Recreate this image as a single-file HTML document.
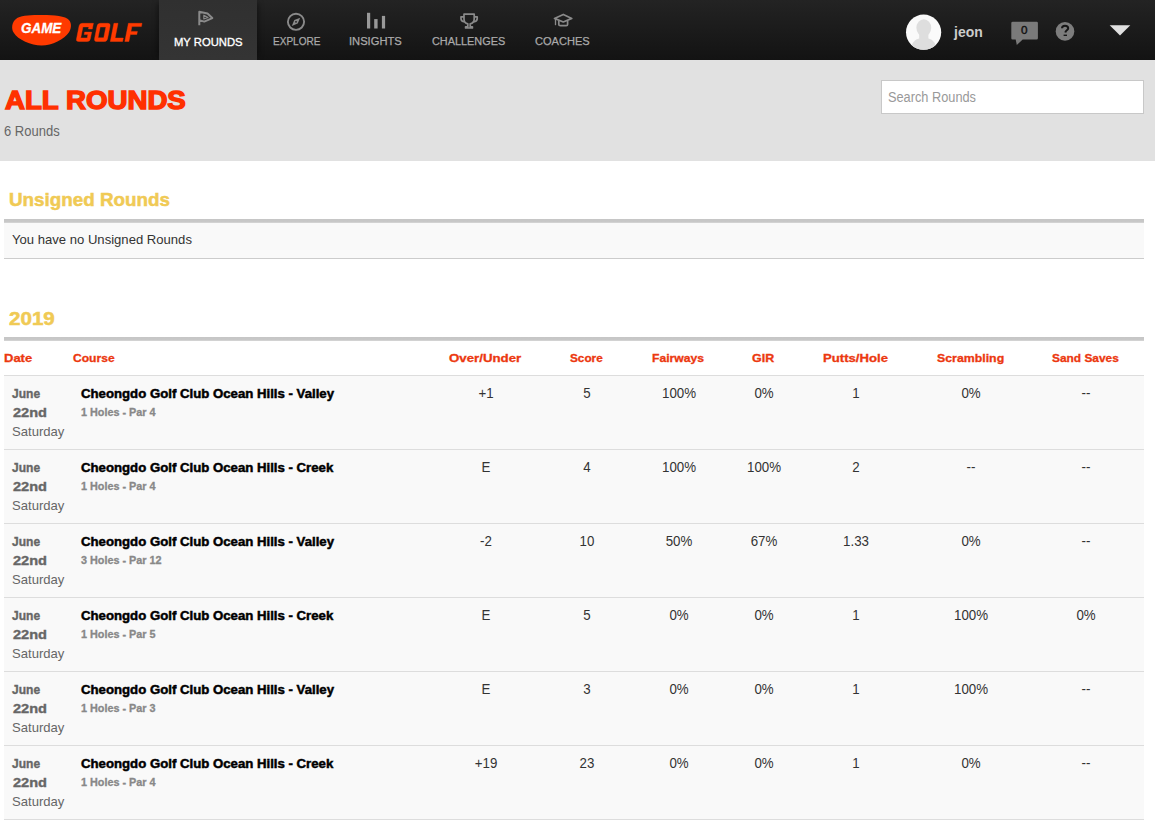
<!DOCTYPE html>
<html><head><meta charset="utf-8">
<style>
*{margin:0;padding:0;box-sizing:border-box}
html,body{width:1155px;height:820px;overflow:hidden;background:#fff;font-family:"Liberation Sans",sans-serif}
.a{position:absolute;white-space:nowrap;line-height:1;transform-origin:0 0}
#hdr{position:absolute;left:0;top:0;width:1155px;height:60px;background:linear-gradient(#232323,#131313)}
#act{position:absolute;left:159px;top:0;width:98px;height:60px;background:linear-gradient(#303030,#343434);box-shadow:-5px 0 5px -3px rgba(0,0,0,.35),5px 0 5px -3px rgba(0,0,0,.35)}
#ph{position:absolute;left:0;top:60px;width:1155px;height:101px;background:#e1e1e1}
.bar{position:absolute;left:4px;width:1140px;height:4px;background:linear-gradient(#c6c6c6 0,#c8c8c8 75%,#d2d2d2 75%)}
.row{position:absolute;left:4px;width:1140px;height:75px;background:#f9f9f9;border-top:1px solid #ddd;border-bottom:1px solid #ddd}
.v{transform:translateX(-50%)}
</style></head><body>
<div id="hdr"></div>
<div id="act"></div>
<svg style="position:absolute;left:0;top:0" width="1155" height="60" viewBox="0 0 1155 60">
<path d="M38,15.1 C50,15.1 62,15.5 67.5,18.8 C72,21.8 71.8,28 69,32.2 C64.5,39 52,45.5 41.6,45.5 C31,45.5 18,40 13.6,32.6 C11,28 12,22 16,18.9 C20,15.9 28,15.1 38,15.1 Z" fill="#ff3a00"/>
<g transform="translate(0,41.5) skewX(-11.3) translate(0,-41.5)" fill="#ff3a00" stroke="#ff3a00" stroke-width="0.4" stroke-linejoin="round">
<path d="M78.5,23.3 H89.8 V29 H85.9 V26.9 H80 V37.9 H86.5 V34.6 H82.8 V32.1 H89.8 V39 Q89.8,41.5 87.3,41.5 H78.5 Q76,41.5 76,39 V25.8 Q76,23.3 78.5,23.3 Z"/>
<path fill-rule="evenodd" d="M96.8,23.3 H104.2 Q107,23.3 107,26.1 V38.7 Q107,41.5 104.2,41.5 H96.8 Q94,41.5 94,38.7 V26.1 Q94,23.3 96.8,23.3 Z M97.3,27 V37.8 H103 V27 Z"/>
<path d="M110.3,23.3 H114.4 V38 H122.6 V41.5 H110.3 Z"/>
<path d="M124.8,23.3 H138.4 V26.6 H128.9 V31.4 H135.4 V34.5 H128.9 V41.5 H124.8 Z"/>
</g>
<g fill="none" stroke="#8a8a8a" stroke-width="1.7" stroke-linejoin="round">
<path d="M199.3,25.2 V11.8 L207.5,13.6 L212.3,18.1 L204.3,21.6 L199.3,20.3" stroke-width="2"/>
<path d="M203.8,15.2 V19 L208,17.6 Z" stroke-width="1.1"/>
<circle cx="296" cy="21.8" r="8.1" stroke-width="1.9"/>
<path d="M464,14.2 H474.2 V19 C474.2,21.8 472,23.4 470.2,23.8 V26.8 H472.4 V28 H465.6 V26.8 H467.8 V23.8 C466,23.4 464,21.8 464,19 Z"/>
<path d="M464,16.8 H461 V18.8 C461,20.6 462.6,21.6 464.6,21.8 M474.2,16.8 H477.2 V18.8 C477.2,20.6 475.6,21.6 473.6,21.8"/>
<path d="M554.5,18.4 L563.3,14.4 L571.8,18.4 L563.3,22 Z"/>
<path d="M558.8,20.4 V24.5 C558.8,25.2 559.5,25.6 560.5,25.6 H566.2 C567,25.6 567.6,25.2 567.6,24.5 V20.4"/>
<path d="M555.5,18.8 V25.2" stroke-width="1.3"/>
</g>
<path d="M291.8,25.9 L297.7,23.5 L300.2,17.7 L294.3,20.1 Z" fill="#8a8a8a"/>
<circle cx="296" cy="21.8" r="0.9" fill="#1b1b1b"/>
<rect x="367" y="12.8" width="3.2" height="15.7" fill="#999"/>
<rect x="374.2" y="19.1" width="3.4" height="9.4" fill="#999"/>
<rect x="381.9" y="15.9" width="3.2" height="12.6" fill="#999"/>
<circle cx="923.6" cy="32.2" r="17.6" fill="#fafafa"/>
<clipPath id="av"><circle cx="923.6" cy="32.2" r="17.6"/></clipPath>
<g clip-path="url(#av)" fill="#dedede">
<ellipse cx="923.8" cy="27.8" rx="7.4" ry="8.6"/>
<path d="M919.2,33 H928.4 V38.5 C932.5,39.5 935.5,42 937,50 H910.5 C912,42 915,39.5 919.2,38.5 Z"/>
</g>
<path d="M1012.8,21.8 H1036.6 Q1037.9,21.8 1037.9,23.1 V38.3 Q1037.9,39.6 1036.6,39.6 H1022.7 L1016.8,45.1 L1015.7,39.6 H1012.6 Q1011.3,39.6 1011.3,38.3 V23.1 Q1011.3,21.8 1012.8,21.8 Z" fill="#7a7a7a"/>
<circle cx="1065" cy="31.4" r="9.3" fill="#7d7d7d"/>
<path d="M1062,28.2 C1062,26.5 1063.4,25.7 1065,25.7 C1066.8,25.7 1068.2,26.7 1068.2,28.3 C1068.2,30.2 1065.6,30.4 1065.3,32.5" fill="none" stroke="#151515" stroke-width="2"/>
<rect x="1063.6" y="34.6" width="3.4" height="1.4" fill="#151515"/>
<path d="M1109.7,25.2 H1130.3 L1120,35.5 Z" fill="#e0e0e0"/>
</svg>
<div id="ph"></div>
<div style="position:absolute;left:881px;top:80px;width:263px;height:34px;background:#fff;border:1px solid #c8c8c8"></div>
<div class="bar" style="top:219px"></div>
<div style="position:absolute;left:4px;top:223px;width:1140px;height:36px;background:#f9f9f9;border-bottom:1px solid #ccc"></div>
<div class="bar" style="top:337px"></div>
<div class="a" style="left:21.21px;top:21.00px;font-size:14.00px;color:#fff;font-weight:bold;font-style:italic;-webkit-text-stroke:0.3px #fff;transform:scaleX(0.9589)">GAME</div>
<div class="a" style="left:1021.25px;top:25.00px;font-size:11.00px;color:#111;-webkit-text-stroke:0.4px #111;transform:scaleX(1.0648)">0</div>
<div class="a" style="left:173.68px;top:36.00px;font-size:11.70px;color:#fff;-webkit-text-stroke:0.35px #fff;transform:scaleX(0.9625)">MY ROUNDS</div>
<div class="a" style="left:272.60px;top:35.00px;font-size:11.70px;color:#aaa;-webkit-text-stroke:0.25px #aaa;transform:scaleX(0.8602)">EXPLORE</div>
<div class="a" style="left:348.53px;top:35.00px;font-size:11.70px;color:#aaa;-webkit-text-stroke:0.25px #aaa;transform:scaleX(0.9550)">INSIGHTS</div>
<div class="a" style="left:431.81px;top:35.00px;font-size:11.70px;color:#aaa;-webkit-text-stroke:0.25px #aaa;transform:scaleX(0.9316)">CHALLENGES</div>
<div class="a" style="left:535.30px;top:35.00px;font-size:11.70px;color:#aaa;-webkit-text-stroke:0.25px #aaa;transform:scaleX(0.9469)">COACHES</div>
<div class="a" style="left:954.08px;top:25.00px;font-size:14.50px;color:#ccc;font-weight:bold;transform:scaleX(0.9625)">jeon</div>
<div class="a" style="left:4.53px;top:88.00px;font-size:25.80px;color:#ff3000;font-weight:bold;-webkit-text-stroke:1.4px #ff3000;transform:scaleX(1.0722)">ALL ROUNDS</div>
<div class="a" style="left:3.74px;top:124.00px;font-size:14.20px;color:#666;transform:scaleX(0.9163)">6 Rounds</div>
<div class="a" style="left:888.21px;top:90.00px;font-size:14.00px;color:#999;transform:scaleX(0.9115)">Search Rounds</div>
<div class="a" style="left:8.80px;top:191.00px;font-size:18.60px;color:#f0ca55;font-weight:bold;-webkit-text-stroke:0.5px #f0ca55;transform:scaleX(1.0118)">Unsigned Rounds</div>
<div class="a" style="left:11.78px;top:233.00px;font-size:13.30px;color:#333;transform:scaleX(0.9841)">You have no Unsigned Rounds</div>
<div class="a" style="left:9.15px;top:310.00px;font-size:18.20px;color:#f0ca55;font-weight:bold;-webkit-text-stroke:0.5px #f0ca55;transform:scaleX(1.1320)">2019</div>
<div class="a" style="left:3.54px;top:353.00px;font-size:10.90px;color:#ec3810;font-weight:bold;-webkit-text-stroke:0.3px #ec3810;transform:scaleX(1.1941)">Date</div>
<div class="a" style="left:72.70px;top:353.00px;font-size:10.90px;color:#ec3810;font-weight:bold;-webkit-text-stroke:0.3px #ec3810;transform:scaleX(1.1100)">Course</div>
<div class="a" style="left:449.02px;top:353.00px;font-size:10.90px;color:#ec3810;font-weight:bold;-webkit-text-stroke:0.3px #ec3810;transform:scaleX(1.2174)">Over/Under</div>
<div class="a" style="left:569.71px;top:353.00px;font-size:10.90px;color:#ec3810;font-weight:bold;-webkit-text-stroke:0.3px #ec3810;transform:scaleX(1.0826)">Score</div>
<div class="a" style="left:651.82px;top:353.00px;font-size:10.90px;color:#ec3810;font-weight:bold;-webkit-text-stroke:0.3px #ec3810;transform:scaleX(1.1163)">Fairways</div>
<div class="a" style="left:752.31px;top:353.00px;font-size:10.90px;color:#ec3810;font-weight:bold;-webkit-text-stroke:0.3px #ec3810;transform:scaleX(1.1434)">GIR</div>
<div class="a" style="left:822.64px;top:353.00px;font-size:10.90px;color:#ec3810;font-weight:bold;-webkit-text-stroke:0.3px #ec3810;transform:scaleX(1.2059)">Putts/Hole</div>
<div class="a" style="left:936.61px;top:353.00px;font-size:10.90px;color:#ec3810;font-weight:bold;-webkit-text-stroke:0.3px #ec3810;transform:scaleX(1.1329)">Scrambling</div>
<div class="a" style="left:1052.43px;top:353.00px;font-size:10.90px;color:#ec3810;font-weight:bold;-webkit-text-stroke:0.3px #ec3810;transform:scaleX(1.0921)">Sand Saves</div>
<div class="row" style="top:375px"></div>
<div class="a" style="left:11.94px;top:388.00px;font-size:12.20px;color:#666;font-weight:bold;-webkit-text-stroke:0.35px #666;transform:scaleX(0.9880)">June</div>
<div class="a" style="left:12.78px;top:407.00px;font-size:12.20px;color:#666;font-weight:bold;-webkit-text-stroke:0.35px #666;transform:scaleX(1.1953)">22nd</div>
<div class="a" style="left:11.59px;top:426.00px;font-size:12.20px;color:#666;transform:scaleX(1.0732)">Saturday</div>
<div class="a" style="left:80.65px;top:389.00px;font-size:11.90px;color:#000;font-weight:bold;-webkit-text-stroke:0.45px #000;transform:scaleX(1.1100)">Cheongdo Golf Club Ocean Hills - Valley</div>
<div class="a" style="left:80.83px;top:407.00px;font-size:10.80px;color:#888;font-weight:bold;-webkit-text-stroke:0.3px #888;transform:scaleX(1.0021)">1 Holes - Par 4</div>
<div class="a v" style="left:485.5px;top:386.00px;font-size:14.60px;color:#333"><span style="display:inline-block;transform:scaleX(0.9121)">+1</span></div>
<div class="a v" style="left:586.8px;top:386.00px;font-size:14.60px;color:#333"><span style="display:inline-block;transform:scaleX(0.9121)">5</span></div>
<div class="a v" style="left:678.5px;top:386.00px;font-size:14.60px;color:#333"><span style="display:inline-block;transform:scaleX(0.9121)">100%</span></div>
<div class="a v" style="left:763.5px;top:386.00px;font-size:14.60px;color:#333"><span style="display:inline-block;transform:scaleX(0.9121)">0%</span></div>
<div class="a v" style="left:855.5px;top:386.00px;font-size:14.60px;color:#333"><span style="display:inline-block;transform:scaleX(0.9121)">1</span></div>
<div class="a v" style="left:970.5px;top:386.00px;font-size:14.60px;color:#333"><span style="display:inline-block;transform:scaleX(0.9121)">0%</span></div>
<div class="a v" style="left:1086px;top:386.00px;font-size:14.60px;color:#333"><span style="display:inline-block;transform:scaleX(0.9121)">--</span></div>
<div class="row" style="top:449px"></div>
<div class="a" style="left:11.94px;top:462.00px;font-size:12.20px;color:#666;font-weight:bold;-webkit-text-stroke:0.35px #666;transform:scaleX(0.9880)">June</div>
<div class="a" style="left:12.78px;top:481.00px;font-size:12.20px;color:#666;font-weight:bold;-webkit-text-stroke:0.35px #666;transform:scaleX(1.1953)">22nd</div>
<div class="a" style="left:11.59px;top:500.00px;font-size:12.20px;color:#666;transform:scaleX(1.0732)">Saturday</div>
<div class="a" style="left:80.65px;top:463.00px;font-size:11.90px;color:#000;font-weight:bold;-webkit-text-stroke:0.45px #000;transform:scaleX(1.1100)">Cheongdo Golf Club Ocean Hills - Creek</div>
<div class="a" style="left:80.83px;top:481.00px;font-size:10.80px;color:#888;font-weight:bold;-webkit-text-stroke:0.3px #888;transform:scaleX(1.0021)">1 Holes - Par 4</div>
<div class="a v" style="left:485.5px;top:460.00px;font-size:14.60px;color:#333"><span style="display:inline-block;transform:scaleX(0.9121)">E</span></div>
<div class="a v" style="left:586.8px;top:460.00px;font-size:14.60px;color:#333"><span style="display:inline-block;transform:scaleX(0.9121)">4</span></div>
<div class="a v" style="left:678.5px;top:460.00px;font-size:14.60px;color:#333"><span style="display:inline-block;transform:scaleX(0.9121)">100%</span></div>
<div class="a v" style="left:763.5px;top:460.00px;font-size:14.60px;color:#333"><span style="display:inline-block;transform:scaleX(0.9121)">100%</span></div>
<div class="a v" style="left:855.5px;top:460.00px;font-size:14.60px;color:#333"><span style="display:inline-block;transform:scaleX(0.9121)">2</span></div>
<div class="a v" style="left:970.5px;top:460.00px;font-size:14.60px;color:#333"><span style="display:inline-block;transform:scaleX(0.9121)">--</span></div>
<div class="a v" style="left:1086px;top:460.00px;font-size:14.60px;color:#333"><span style="display:inline-block;transform:scaleX(0.9121)">--</span></div>
<div class="row" style="top:523px"></div>
<div class="a" style="left:11.94px;top:536.00px;font-size:12.20px;color:#666;font-weight:bold;-webkit-text-stroke:0.35px #666;transform:scaleX(0.9880)">June</div>
<div class="a" style="left:12.78px;top:555.00px;font-size:12.20px;color:#666;font-weight:bold;-webkit-text-stroke:0.35px #666;transform:scaleX(1.1953)">22nd</div>
<div class="a" style="left:11.59px;top:574.00px;font-size:12.20px;color:#666;transform:scaleX(1.0732)">Saturday</div>
<div class="a" style="left:80.65px;top:537.00px;font-size:11.90px;color:#000;font-weight:bold;-webkit-text-stroke:0.45px #000;transform:scaleX(1.1100)">Cheongdo Golf Club Ocean Hills - Valley</div>
<div class="a" style="left:80.83px;top:555.00px;font-size:10.80px;color:#888;font-weight:bold;-webkit-text-stroke:0.3px #888;transform:scaleX(1.0021)">3 Holes - Par 12</div>
<div class="a v" style="left:485.5px;top:534.00px;font-size:14.60px;color:#333"><span style="display:inline-block;transform:scaleX(0.9121)">-2</span></div>
<div class="a v" style="left:586.8px;top:534.00px;font-size:14.60px;color:#333"><span style="display:inline-block;transform:scaleX(0.9121)">10</span></div>
<div class="a v" style="left:678.5px;top:534.00px;font-size:14.60px;color:#333"><span style="display:inline-block;transform:scaleX(0.9121)">50%</span></div>
<div class="a v" style="left:763.5px;top:534.00px;font-size:14.60px;color:#333"><span style="display:inline-block;transform:scaleX(0.9121)">67%</span></div>
<div class="a v" style="left:855.5px;top:534.00px;font-size:14.60px;color:#333"><span style="display:inline-block;transform:scaleX(0.9121)">1.33</span></div>
<div class="a v" style="left:970.5px;top:534.00px;font-size:14.60px;color:#333"><span style="display:inline-block;transform:scaleX(0.9121)">0%</span></div>
<div class="a v" style="left:1086px;top:534.00px;font-size:14.60px;color:#333"><span style="display:inline-block;transform:scaleX(0.9121)">--</span></div>
<div class="row" style="top:597px"></div>
<div class="a" style="left:11.94px;top:610.00px;font-size:12.20px;color:#666;font-weight:bold;-webkit-text-stroke:0.35px #666;transform:scaleX(0.9880)">June</div>
<div class="a" style="left:12.78px;top:629.00px;font-size:12.20px;color:#666;font-weight:bold;-webkit-text-stroke:0.35px #666;transform:scaleX(1.1953)">22nd</div>
<div class="a" style="left:11.59px;top:648.00px;font-size:12.20px;color:#666;transform:scaleX(1.0732)">Saturday</div>
<div class="a" style="left:80.65px;top:611.00px;font-size:11.90px;color:#000;font-weight:bold;-webkit-text-stroke:0.45px #000;transform:scaleX(1.1100)">Cheongdo Golf Club Ocean Hills - Creek</div>
<div class="a" style="left:80.83px;top:629.00px;font-size:10.80px;color:#888;font-weight:bold;-webkit-text-stroke:0.3px #888;transform:scaleX(1.0021)">1 Holes - Par 5</div>
<div class="a v" style="left:485.5px;top:608.00px;font-size:14.60px;color:#333"><span style="display:inline-block;transform:scaleX(0.9121)">E</span></div>
<div class="a v" style="left:586.8px;top:608.00px;font-size:14.60px;color:#333"><span style="display:inline-block;transform:scaleX(0.9121)">5</span></div>
<div class="a v" style="left:678.5px;top:608.00px;font-size:14.60px;color:#333"><span style="display:inline-block;transform:scaleX(0.9121)">0%</span></div>
<div class="a v" style="left:763.5px;top:608.00px;font-size:14.60px;color:#333"><span style="display:inline-block;transform:scaleX(0.9121)">0%</span></div>
<div class="a v" style="left:855.5px;top:608.00px;font-size:14.60px;color:#333"><span style="display:inline-block;transform:scaleX(0.9121)">1</span></div>
<div class="a v" style="left:970.5px;top:608.00px;font-size:14.60px;color:#333"><span style="display:inline-block;transform:scaleX(0.9121)">100%</span></div>
<div class="a v" style="left:1086px;top:608.00px;font-size:14.60px;color:#333"><span style="display:inline-block;transform:scaleX(0.9121)">0%</span></div>
<div class="row" style="top:671px"></div>
<div class="a" style="left:11.94px;top:684.00px;font-size:12.20px;color:#666;font-weight:bold;-webkit-text-stroke:0.35px #666;transform:scaleX(0.9880)">June</div>
<div class="a" style="left:12.78px;top:703.00px;font-size:12.20px;color:#666;font-weight:bold;-webkit-text-stroke:0.35px #666;transform:scaleX(1.1953)">22nd</div>
<div class="a" style="left:11.59px;top:722.00px;font-size:12.20px;color:#666;transform:scaleX(1.0732)">Saturday</div>
<div class="a" style="left:80.65px;top:685.00px;font-size:11.90px;color:#000;font-weight:bold;-webkit-text-stroke:0.45px #000;transform:scaleX(1.1100)">Cheongdo Golf Club Ocean Hills - Valley</div>
<div class="a" style="left:80.83px;top:703.00px;font-size:10.80px;color:#888;font-weight:bold;-webkit-text-stroke:0.3px #888;transform:scaleX(1.0021)">1 Holes - Par 3</div>
<div class="a v" style="left:485.5px;top:682.00px;font-size:14.60px;color:#333"><span style="display:inline-block;transform:scaleX(0.9121)">E</span></div>
<div class="a v" style="left:586.8px;top:682.00px;font-size:14.60px;color:#333"><span style="display:inline-block;transform:scaleX(0.9121)">3</span></div>
<div class="a v" style="left:678.5px;top:682.00px;font-size:14.60px;color:#333"><span style="display:inline-block;transform:scaleX(0.9121)">0%</span></div>
<div class="a v" style="left:763.5px;top:682.00px;font-size:14.60px;color:#333"><span style="display:inline-block;transform:scaleX(0.9121)">0%</span></div>
<div class="a v" style="left:855.5px;top:682.00px;font-size:14.60px;color:#333"><span style="display:inline-block;transform:scaleX(0.9121)">1</span></div>
<div class="a v" style="left:970.5px;top:682.00px;font-size:14.60px;color:#333"><span style="display:inline-block;transform:scaleX(0.9121)">100%</span></div>
<div class="a v" style="left:1086px;top:682.00px;font-size:14.60px;color:#333"><span style="display:inline-block;transform:scaleX(0.9121)">--</span></div>
<div class="row" style="top:745px"></div>
<div class="a" style="left:11.94px;top:758.00px;font-size:12.20px;color:#666;font-weight:bold;-webkit-text-stroke:0.35px #666;transform:scaleX(0.9880)">June</div>
<div class="a" style="left:12.78px;top:777.00px;font-size:12.20px;color:#666;font-weight:bold;-webkit-text-stroke:0.35px #666;transform:scaleX(1.1953)">22nd</div>
<div class="a" style="left:11.59px;top:796.00px;font-size:12.20px;color:#666;transform:scaleX(1.0732)">Saturday</div>
<div class="a" style="left:80.65px;top:759.00px;font-size:11.90px;color:#000;font-weight:bold;-webkit-text-stroke:0.45px #000;transform:scaleX(1.1100)">Cheongdo Golf Club Ocean Hills - Creek</div>
<div class="a" style="left:80.83px;top:777.00px;font-size:10.80px;color:#888;font-weight:bold;-webkit-text-stroke:0.3px #888;transform:scaleX(1.0021)">1 Holes - Par 4</div>
<div class="a v" style="left:485.5px;top:756.00px;font-size:14.60px;color:#333"><span style="display:inline-block;transform:scaleX(0.9121)">+19</span></div>
<div class="a v" style="left:586.8px;top:756.00px;font-size:14.60px;color:#333"><span style="display:inline-block;transform:scaleX(0.9121)">23</span></div>
<div class="a v" style="left:678.5px;top:756.00px;font-size:14.60px;color:#333"><span style="display:inline-block;transform:scaleX(0.9121)">0%</span></div>
<div class="a v" style="left:763.5px;top:756.00px;font-size:14.60px;color:#333"><span style="display:inline-block;transform:scaleX(0.9121)">0%</span></div>
<div class="a v" style="left:855.5px;top:756.00px;font-size:14.60px;color:#333"><span style="display:inline-block;transform:scaleX(0.9121)">1</span></div>
<div class="a v" style="left:970.5px;top:756.00px;font-size:14.60px;color:#333"><span style="display:inline-block;transform:scaleX(0.9121)">0%</span></div>
<div class="a v" style="left:1086px;top:756.00px;font-size:14.60px;color:#333"><span style="display:inline-block;transform:scaleX(0.9121)">--</span></div>
</body></html>
